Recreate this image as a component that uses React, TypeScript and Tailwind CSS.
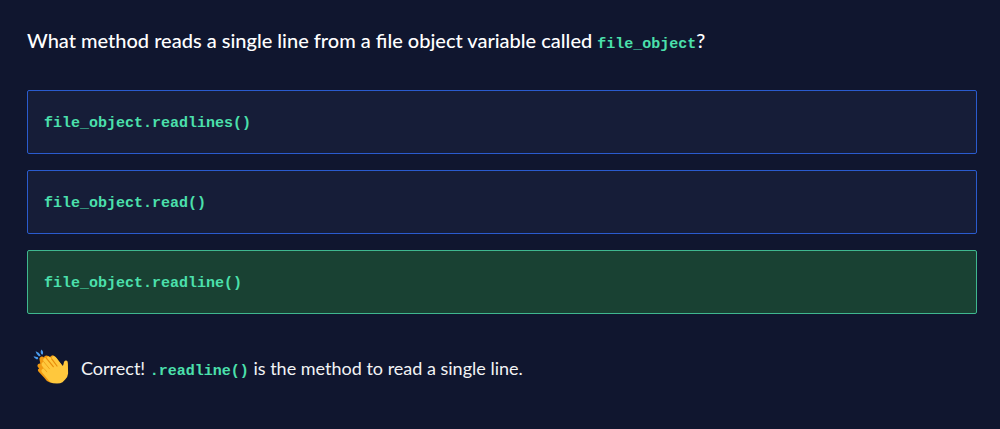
import { useState } from "react";
import type { ReactNode } from "react";
import clsx from "clsx";

const options = ["file_object.readlines()", "file_object.read()", "file_object.readline()"];
const answer = 2;

function Code({ children }: { children: ReactNode }) {
  return (
    <code className="font-['Liberation_Mono',monospace] text-[15px] leading-6 font-bold text-[#4be0ac]">
      {children}
    </code>
  );
}

function ClapIcon() {
  return (
    <svg className="size-10 shrink-0" viewBox="0 0 40 40" aria-hidden="true">
      <g fill="#4a9df0">
        <path d="M0.500 8.200 5 9.200Q5.700 10.900 4 11.400Q1.500 10.900 0.500 8.200Z" />
        <path d="M2.600 3.200Q6.200 4.200 7.600 7.200Q7.300 8.700 5.900 8.200Q3.200 6.200 2.600 3.200Z" />
        <path d="M8.300 1.500Q10.700 3.300 9.900 6.200Q8.800 7.200 8.100 5.800Q7.300 3.400 8.300 1.500Z" />
      </g>
      <path
        fill="#f19a12"
        d="M6.700 12.500Q5.600 10.200 7.700 8.800Q9.700 8.100 11 9.600Q11 7.700 13 7.400Q15.500 7.300 17 9Q19 6.500 21 7.700L29 17L24 34L17 34.500Q13 33 11 29.500L5.400 23.500Q4 21.500 6.200 20.500Q3.400 18 5 16.200Q6 15.300 7.300 15.500Z"
      />
      <path
        fill="#ffc83d"
        d="M10.800 13.800Q9.400 11.400 11.200 10.200Q12.200 9.600 13.500 10.400Q14 8.100 16.200 8.700Q17.500 9.100 18.700 10.900Q18.700 8 20.800 7.900Q22.500 8 23.800 10.200L29 17.200Q30.200 18.400 30.400 16.600L31 14Q31.600 12 33.400 12.600Q35.100 13.200 34.900 15.800L35.100 25.500Q34.700 29 32.400 31.300L29.500 34.200Q27.500 35.500 24 35.500L20 35.300Q17.500 34.700 15.800 32.400L9.100 24.400Q7.600 22.200 9.400 20.900Q10.300 20.300 11.400 21L8.800 17.600Q7.900 15.400 9.600 14.200Q10.300 13.700 10.800 13.800Z"
      />
      <path
        fill="none"
        stroke="#e88c0c"
        strokeWidth="1.200"
        strokeLinecap="round"
        strokeLinejoin="round"
        d="M13.500 10.400 20.300 18.700M18.700 10.900 24 18"
      />
      <path
        fill="none"
        stroke="#f2a31b"
        strokeWidth="1"
        strokeLinecap="round"
        d="M10.800 13.800 16.500 20.800M11.400 21 13.800 23.800"
      />
    </svg>
  );
}

export default function App() {
  const [selected, setSelected] = useState(answer);

  return (
    <main className="flex min-h-screen flex-col bg-[#10162f] pt-6 pr-[23px] pb-8 pl-[27px] font-[Lato,sans-serif] text-white">
      <h1 className="text-xl leading-8 font-medium">
        What method reads a single line from a file object variable called <Code>file_object</Code>?
      </h1>

      <div className="mt-[33px] flex flex-col gap-4">
        {options.map((option, index) => (
          <button
            key={option}
            type="button"
            aria-pressed={selected === index}
            onClick={() => setSelected(index)}
            className={clsx(
              "flex h-16 w-full cursor-pointer items-center rounded-xs border px-4 pt-1 text-left",
              selected === index && index === answer
                ? "border-[#3fb78f] bg-[#194133]"
                : "border-[#2a5bce] bg-[#161d38]",
            )}
          >
            <Code>{option}</Code>
          </button>
        ))}
      </div>

      {selected === answer && (
        <div role="status" className="mt-[34px] flex items-center gap-2 pl-1.5 text-[#f2f3f5]">
          <ClapIcon />
          <p className="pt-1 text-lg leading-6">
            Correct! <Code>.readline()</Code> is the method to read a single line.
          </p>
        </div>
      )}
    </main>
  );
}
